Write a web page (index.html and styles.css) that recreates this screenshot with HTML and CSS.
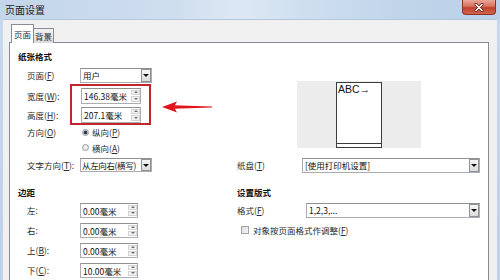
FILE: index.html
```html
<!DOCTYPE html>
<html lang="zh-CN">
<head>
    <meta charset="UTF-8">
    <title>页面设置</title>
    <link rel="stylesheet" href="styles.css">
</head>
<body>
<div class="window">
    <div class="titlebar">
        <span class="title">页面设置</span>
        <span class="close">
            <svg width="10" height="9" viewBox="0 0 10 9">
                <path d="M2 1.5 L8 7.5 M8 1.5 L2 7.5" stroke="#5a1c14" stroke-width="3" stroke-linecap="round"/>
                <path d="M2 1.5 L8 7.5 M8 1.5 L2 7.5" stroke="#fff" stroke-width="1.6" stroke-linecap="round"/>
            </svg>
        </span>
    </div>

    <div class="client">
        <div class="tabs">
            <div class="tab active">页面</div>
            <div class="tab">背景</div>
        </div>

        <div class="panel">
            <div class="section top">
                <div class="col-left">
                    <div class="heading">纸张格式</div>
                    <div class="row h22">
                        <span class="lbl">页面(<u>F</u>)</span>
                        <div class="select w72"><span class="val">用户</span><span class="drop"></span></div>
                    </div>
                    <div class="row h19">
                        <span class="lbl">宽度(<u>W</u>):</span>
                        <div class="spin w60 tall"><span class="val">146.38毫米</span><span class="arrows"><i class="up"></i><i class="down"></i></span></div>
                    </div>
                    <div class="row h19">
                        <span class="lbl">高度(<u>H</u>):</span>
                        <div class="spin w60 tall"><span class="val">207.1毫米</span><span class="arrows"><i class="up"></i><i class="down"></i></span></div>
                    </div>
                    <div class="row h16">
                        <span class="lbl">方向(<u>O</u>)</span>
                        <span class="radio checked"></span><span>纵向(<u>P</u>)</span>
                    </div>
                    <div class="row h15">
                        <span class="lbl"></span>
                        <span class="radio"></span><span>横向(<u>A</u>)</span>
                    </div>
                    <div class="row h20">
                        <span class="lbl">文字方向(<u>T</u>):</span>
                        <div class="select w72 short"><span class="val tight">从左向右(横写)</span><span class="drop"></span></div>
                    </div>
                </div>

                <div class="col-right">
                    <div class="preview">
                        <div class="sheet">ABC→</div>
                    </div>
                    <div class="row h20 push">
                        <span class="lbl wide65">纸盘(<u>T</u>)</span>
                        <div class="select w178"><span class="val">[使用打印机设置]</span><span class="drop"></span></div>
                    </div>
                </div>
            </div>

            <div class="section bottom">
                <div class="col-left">
                    <div class="heading">边距</div>
                    <div class="row h20">
                        <span class="lbl">左:</span>
                        <div class="spin w58"><span class="val">0.00毫米</span><span class="arrows"><i class="up"></i><i class="down"></i></span></div>
                    </div>
                    <div class="row h20">
                        <span class="lbl">右:</span>
                        <div class="spin w58"><span class="val">0.00毫米</span><span class="arrows"><i class="up"></i><i class="down"></i></span></div>
                    </div>
                    <div class="row h20">
                        <span class="lbl">上(<u>B</u>):</span>
                        <div class="spin w58"><span class="val">0.00毫米</span><span class="arrows"><i class="up"></i><i class="down"></i></span></div>
                    </div>
                    <div class="row h20">
                        <span class="lbl">下(<u>C</u>):</span>
                        <div class="spin w58"><span class="val">10.00毫米</span><span class="arrows"><i class="up"></i><i class="down"></i></span></div>
                    </div>
                </div>

                <div class="col-right">
                    <div class="heading">设置版式</div>
                    <div class="row h20">
                        <span class="lbl wide69">格式(<u>F</u>)</span>
                        <div class="select w174"><span class="val">1,2,3,...</span><span class="drop"></span></div>
                    </div>
                    <div class="row h20 check-row">
                        <span class="checkbox"></span><span>对象按页面格式作调整(<u>F</u>)</span>
                    </div>
                </div>
            </div>

            <!-- annotation over the dialog -->
            <div class="highlight"></div>
            <svg class="pointer" width="50" height="12" viewBox="0 0 50 12">
                <polygon points="11,4.3 50,5.6 50,6.4 11,7.7" fill="#e3141c"/>
                <polygon points="0,6 15,0.5 12,6 15,11.5" fill="#e3141c"/>
            </svg>
        </div>
    </div>
</div>
</body>
</html>
```

FILE: styles.css
```css
* {
    box-sizing: border-box;
}

body {
    margin: 0;
    width: 500px;
    height: 280px;
    overflow: hidden;
    font-family: "Noto Sans CJK SC", "DejaVu Sans", sans-serif;
    font-size: 8.5px;
    color: #2a2a2a;
}

u {
    text-decoration-thickness: 1px;
    text-underline-offset: 1px;
}

.window {
    height: 280px;
    display: flex;
    flex-direction: column;
    background: linear-gradient(180deg, #c7d9ec, #bdd1e7);
}

/* title bar */
.titlebar {
    height: 19px;
    flex: none;
    display: flex;
    justify-content: space-between;
    align-items: flex-start;
    padding-left: 5px;
    background: linear-gradient(90deg, #c2d5ea 0%, #cfdeef 35%, #dde8f4 48%, #cfdff0 60%, #c0d4ea 80%, #bcd1e8 100%);
}

.title {
    line-height: 19px;
    font-size: 10px;
    color: #1e1e1e;
}

.close {
    width: 34px;
    height: 15px;
    margin-right: 4px;
    border: 1px solid #8a3528;
    border-top: none;
    border-radius: 0 0 4px 4px;
    background: linear-gradient(180deg, #e9a999 0%, #d9705d 45%, #c2412c 55%, #d2644b 100%);
    display: flex;
    align-items: center;
    justify-content: center;
}

/* client area */
.client {
    flex: 1;
    min-height: 0;
    margin: 0 3px;
    padding: 5px 8px 0 6px;
    background: #f0f0f0;
    border-top: 1px solid #b4c6da;
    display: flex;
    flex-direction: column;
}

.tabs {
    height: 19px;
    margin: -1px 0 -1px 2px;
    display: flex;
    align-items: flex-end;
    position: relative;
    z-index: 1;
}

.tab {
    width: 20px;
    height: 15px;
    border: 1px solid #898c95;
    border-bottom: none;
    border-left: none;
    background: linear-gradient(180deg, #f2f2f2, #dadada);
    text-align: center;
    line-height: 14px;
    font-size: 8.5px;
    white-space: nowrap;
}

.tab.active {
    width: 23px;
    height: 19px;
    border-left: 1px solid #898c95;
    background: #fff;
    line-height: 18px;
}

.panel {
    flex: 1;
    position: relative;
    background: #fff;
    border: 1px solid #898c95;
    border-bottom: none;
}

.section {
    display: grid;
    grid-template-columns: 221px 1fr;
}

.section.top {
    padding-top: 5px;
}

.section.bottom {
    margin-top: 9px;
}

.col-left {
    padding-left: 8px;
    display: flex;
    flex-direction: column;
}

.col-right {
    padding-left: 6px;
    display: flex;
    flex-direction: column;
}

.heading {
    height: 16px;
    line-height: 16px;
    font-weight: bold;
    color: #111;
}

.row {
    display: flex;
    align-items: center;
    white-space: nowrap;
}

.col-left .row {
    padding-left: 9px;
}

.h15 { height: 15px; }
.h16 { height: 16px; }
.h19 { height: 19px; }
.h20 { height: 20px; }
.h22 { height: 22px; }

.push {
    margin-top: auto;
}

.lbl {
    width: 53px;
    flex: none;
    white-space: nowrap;
}

.lbl.wide65 { width: 65px; }
.lbl.wide69 { width: 69px; }

/* combo boxes */
.select {
    height: 15px;
    display: flex;
    align-items: stretch;
    border: 1px solid #abadb3;
    border-top-color: #8e8f8f;
    background: #fff;
}

.select.short {
    height: 14px;
}

.w72 { width: 72px; }
.w174 { width: 174px; }
.w178 { width: 178px; }

.val {
    flex: 1;
    min-width: 0;
    padding-left: 2px;
    line-height: 13px;
    white-space: nowrap;
    overflow: hidden;
    color: #111;
}

.val.tight {
    padding-left: 1px;
    letter-spacing: -0.35px;
}

.drop {
    width: 10px;
    flex: none;
    border: 1px solid #8f9296;
    background: linear-gradient(180deg, #f5f5f5, #dcdcdc);
    display: flex;
    align-items: center;
    justify-content: center;
}

.drop::after {
    content: "";
    border-left: 3px solid transparent;
    border-right: 3px solid transparent;
    border-top: 3px solid #111;
}

/* spin boxes */
.spin {
    height: 15px;
    display: flex;
    border: 1px solid #abadb3;
    border-top-color: #8e8f8f;
    background: #fff;
}

.spin.tall {
    height: 16px;
    margin-left: 1px;
}

.w58 { width: 58px; }
.w60 { width: 60px; }

.spin .val {
    line-height: 14px;
}

.arrows {
    width: 9px;
    flex: none;
    display: flex;
    flex-direction: column;
    gap: 1px;
    padding: 1px 0;
}

.arrows i {
    flex: 1;
    border: 1px solid #d4d4d4;
    background: #f2f2f2;
    display: flex;
    align-items: center;
    justify-content: center;
}

.arrows i::after {
    content: "";
    border-left: 2px solid transparent;
    border-right: 2px solid transparent;
}

.arrows .up::after {
    border-bottom: 2px solid #6f6f6f;
}

.arrows .down::after {
    border-top: 2px solid #6f6f6f;
}

/* radios and checkbox */
.radio {
    width: 7px;
    height: 7px;
    margin: 0 3px 0 2px;
    border-radius: 50%;
    border: 1px solid #9c9c9c;
    background: radial-gradient(circle, #f2f2f2 30%, #d4d4d4 100%);
}

.radio.checked {
    background: radial-gradient(circle, #2c3f5c 0 1.6px, #c9d3df 2.2px, #e6e6e6 100%);
}

.check-row {
    padding-left: 4px;
}

.checkbox {
    width: 8px;
    height: 8px;
    margin-right: 4px;
    border: 1px solid #a3a3a3;
    background: linear-gradient(135deg, #dcdcdc, #f6f6f6);
}

/* page preview */
.preview {
    width: 124px;
    height: 67px;
    margin: 33px 0 0 60px;
    padding: 1px 0 0 39px;
    background: #ececec;
}

.sheet {
    width: 46px;
    height: 66px;
    position: relative;
    border: 1px solid #3c3c3c;
    background: #fff;
    padding: 1px 0 0 1px;
    font-family: "Liberation Sans", sans-serif;
    font-size: 10.5px;
    line-height: 11px;
    color: #111;
    white-space: nowrap;
}

.sheet::after {
    content: "";
    position: absolute;
    left: 0;
    right: 0;
    bottom: 3px;
    border-top: 1px solid #3c3c3c;
}

/* red annotation */
.highlight {
    position: absolute;
    left: 60px;
    top: 41px;
    width: 81px;
    height: 41px;
    border: 2px solid #c3252c;
}

.pointer {
    position: absolute;
    left: 152px;
    top: 58px;
}
```
